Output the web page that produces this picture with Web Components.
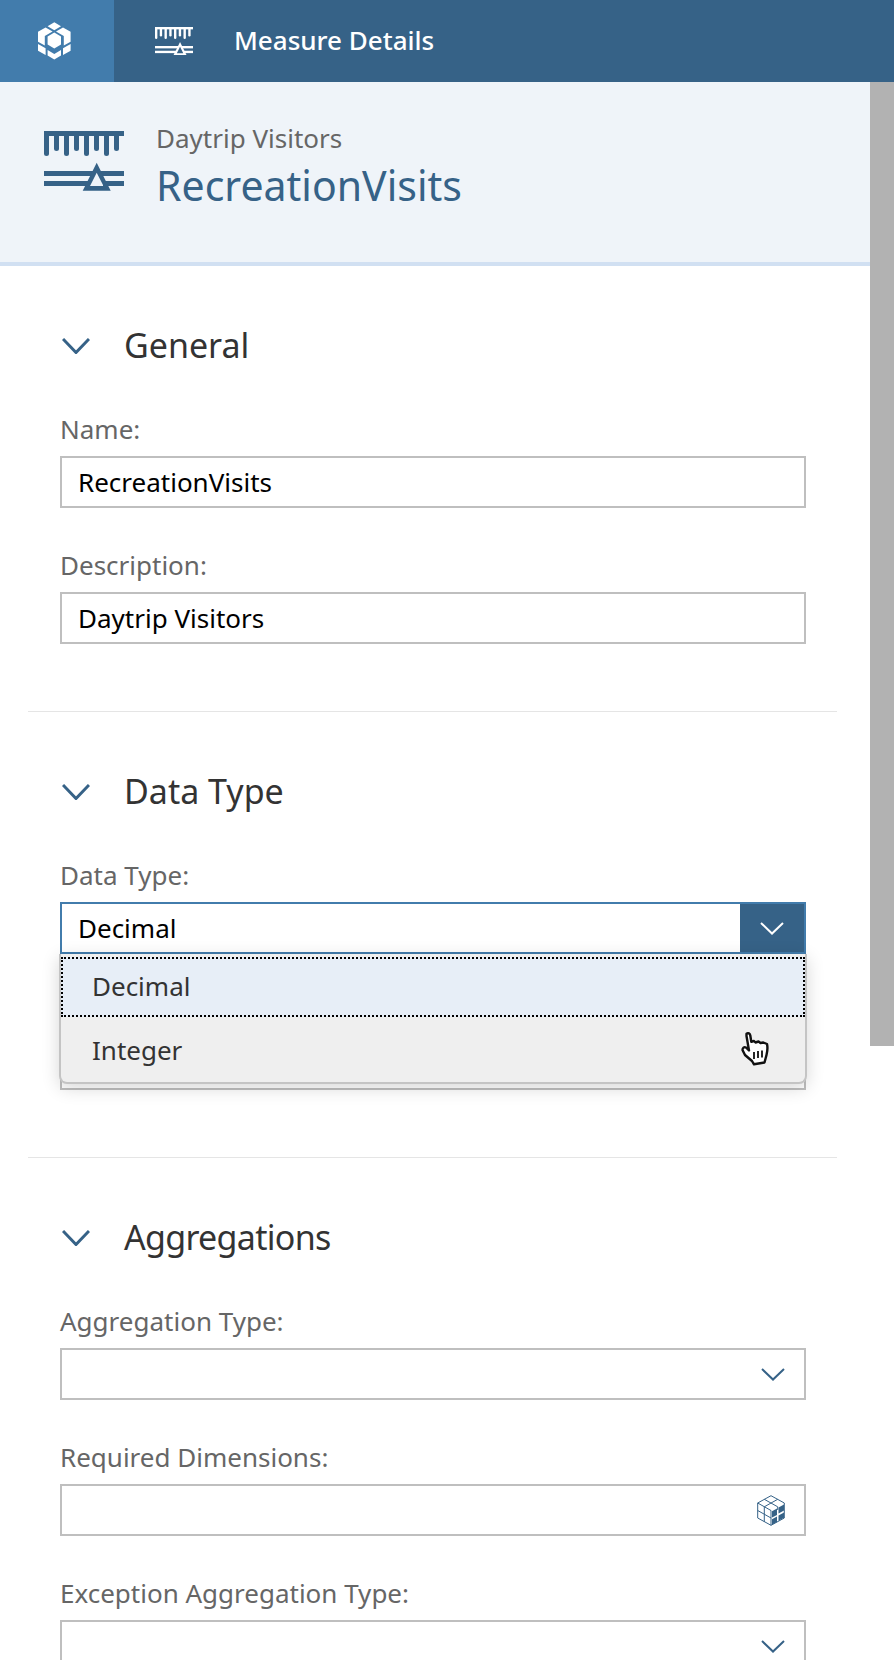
<!DOCTYPE html>
<html lang="en">
<head>
<meta charset="utf-8">
<title>Measure Details</title>
<style>
    html, body{
        margin:0;
        height:100%;
        overflow:hidden;
        background:#fff;
        font-family:"Noto Sans", sans-serif;
    }
    .page-body{
        display:flex;
        flex-direction:row;
        height:1578px;
    }
    .page-main{
        flex:1;
        min-width:0;
    }
</style>
</head>
<body>
<app-header>Measure Details</app-header>
<div class="page-body">
    <div class="page-main">
        <object-header subtitle="Daytrip Visitors">RecreationVisits</object-header>
        <form-panel>
            <form-section heading="General">
                <form-field label="Name:"><value-box value="RecreationVisits"></value-box></form-field>
                <form-field label="Description:"><value-box value="Daytrip Visitors"></value-box></form-field>
            </form-section>
            <form-section heading="Data Type">
                <form-field label="Data Type:">
                    <value-box value="Decimal" kind="open"></value-box>
                    <select-list></select-list>
                </form-field>
                <form-field label=""><value-box></value-box></form-field>
            </form-section>
            <form-section heading="Aggregations" style="--heading-spacing:-.7px" last>
                <form-field label="Aggregation Type:"><value-box kind="select"></value-box></form-field>
                <form-field label="Required Dimensions:"><value-box kind="cube"></value-box></form-field>
                <form-field label="Exception Aggregation Type:"><value-box kind="select"></value-box></form-field>
            </form-section>
        </form-panel>
    </div>
    <scroll-thumb></scroll-thumb>
</div>

<script>
const FONT = `"Noto Sans", sans-serif`;

const measureIcon = (width, height, color) => `
    <svg width="${width}" height="${height}" viewBox="0 0 80 60" fill="${color}" style="display:block">
        <rect x="0" y="0" width="80" height="5"/>
        <path d="M0 0h5v22.500a2.500 2.500 0 0 1-5 0z"/>
        <path d="M10 0h5v17.500a2.500 2.500 0 0 1-5 0z"/>
        <path d="M20 0h5v22.500a2.500 2.500 0 0 1-5 0z"/>
        <path d="M30 0h5v17.500a2.500 2.500 0 0 1-5 0z"/>
        <path d="M40 0h5v22.500a2.500 2.500 0 0 1-5 0z"/>
        <path d="M50 0h5v17.500a2.500 2.500 0 0 1-5 0z"/>
        <path d="M60 0h5v22.500a2.500 2.500 0 0 1-5 0z"/>
        <path d="M70 0h5v17.500a2.500 2.500 0 0 1-5 0z"/>
        <rect x="0" y="40" width="50" height="5"/>
        <rect x="55.400" y="40" width="24.600" height="5"/>
        <rect x="0" y="50" width="46" height="5"/>
        <rect x="59" y="50" width="21" height="5"/>
        <path fill-rule="evenodd" d="M52.700 31.700L66.700 59.700H38.700zM52.700 41.700L46 55H59.500z"/>
    </svg>`;

const chevron = (width, height, color, stroke) => `
    <svg width="${width}" height="${height}" viewBox="0 0 ${width} ${height}" fill="none" style="display:block">
        <path d="M1 1L${width / 2} ${height - 1.500}L${width - 1} 1" stroke="${color}" stroke-width="${stroke}"/>
    </svg>`;

class AppHeader extends HTMLElement {

    constructor() {
        super();
        this.shadow = this.attachShadow({mode: 'open'});
        this.shadow.innerHTML =
        /*html*/
        `
        <style>
            :host{
                display:flex;
                flex-direction:row;
                align-items:center;
                height:82px;
                background-color:#366287;
                color:white;
                font-family:${FONT};
            }
            .tile{
                display:flex;
                align-items:center;
                width:114px;
                height:100%;
                padding-left:37px;
                box-sizing:border-box;
                background-color:#427cac;
            }
            .measure{
                margin-left:41px;
            }
            .title{
                margin-left:41px;
                font-size:26px;
                font-weight:500;
                margin-top:-2px;
            }
        </style>
        <div class="tile">
            <svg width="34" height="38" viewBox="37 20.500 34 38" fill="white">
                <polygon points="54.300,20.700 61,24.700 54.300,28.700 47.600,24.700"/>
                <polygon points="38,30.200 45.600,26 52.600,30 44.800,34.400 44.800,44 38,40.200"/>
                <polygon points="70.600,30.200 63,26 56,30 63.800,34.400 63.800,44 70.600,40.200"/>
                <polygon points="54.300,31 61,35 61,43 54.300,47 47.600,43 47.600,35"/>
                <polygon points="38,42.500 45.600,46.800 45.600,53.500 38,49.300"/>
                <polygon points="70.600,42.500 63,46.800 63,53.500 70.600,49.300"/>
                <polygon points="47.600,48.500 54.300,52.400 61,48.500 61,54 54.300,58 47.600,54"/>
            </svg>
        </div>
        <div class="measure">${measureIcon(38, 28.500, 'white')}</div>
        <div class="title"><slot></slot></div>
        `;
    }
}

class ObjectHeader extends HTMLElement {

    constructor() {
        super();
        this.shadow = this.attachShadow({mode: 'open'});
        this.shadow.innerHTML =
        /*html*/
        `
        <style>
            :host{
                display:flex;
                flex-direction:row;
                height:136px;
                padding:44px 0 0 44px;
                background-color:#eff4f9;
                border-bottom:4px solid #d1e0f2;
                font-family:${FONT};
            }
            .icon{
                margin:5px 32px 0 0;
            }
            .subtitle{
                font-size:26px;
                line-height:24px;
                color:#666;
            }
            .title{
                font-size:41px;
                line-height:50px;
                margin-top:10px;
                color:#366287;
            }
        </style>
        <div class="icon">${measureIcon(80, 60, '#366287')}</div>
        <div>
            <div class="subtitle">${this.getAttribute('subtitle')}</div>
            <div class="title"><slot></slot></div>
        </div>
        `;
    }
}

class FormPanel extends HTMLElement {

    constructor() {
        super();
        this.shadow = this.attachShadow({mode: 'open'});
        this.shadow.innerHTML =
        /*html*/
        `
        <style>
            :host{
                display:block;
                padding:0 33px 0 28px;
            }
        </style>
        <slot></slot>
        `;
    }
}

class FormSection extends HTMLElement {

    constructor() {
        super();
        this.shadow = this.attachShadow({mode: 'open'});
        this.shadow.innerHTML =
        /*html*/
        `
        <style>
            :host{
                display:block;
                padding:60px 31px 67px 32px;
                border-bottom:1px solid #e5e5e5;
                font-family:${FONT};
            }
            :host([last]){
                border-bottom:none;
            }
            .heading{
                display:flex;
                flex-direction:row;
                align-items:center;
                height:40px;
                margin-bottom:50px;
                color:#333;
                font-size:34px;
                letter-spacing:var(--heading-spacing, 0);
            }
            .heading span{
                margin-top:-2px;
            }
            .arrow{
                margin:0 34px 0 2px;
            }
            .fields{
                display:flex;
                flex-direction:column;
                gap:44px;
            }
        </style>
        <div class="heading">
            <div class="arrow">${chevron(28, 16, '#366287', 3)}</div>
            <span>${this.getAttribute('heading')}</span>
        </div>
        <div class="fields"><slot></slot></div>
        `;
    }
}

class FormField extends HTMLElement {

    constructor() {
        super();
        this.shadow = this.attachShadow({mode: 'open'});
        this.shadow.innerHTML =
        /*html*/
        `
        <style>
            :host{
                display:block;
                position:relative;
                font-family:${FONT};
            }
            .label{
                height:40px;
                line-height:26px;
                font-size:26px;
                color:#666;
            }
        </style>
        <div class="label">${this.getAttribute('label')}</div>
        <slot></slot>
        `;
    }
}

class ValueBox extends HTMLElement {

    constructor() {
        super();
        this.shadow = this.attachShadow({mode: 'open'});
        const kind = this.getAttribute('kind');
        const value = this.getAttribute('value') || '';
        let addon = '';
        if (kind === 'open') {
            addon = `<div class="button">${chevron(24, 13, 'white', 2)}</div>`;
        } else if (kind === 'select') {
            addon = `<div class="addon">${chevron(24, 13, '#366287', 2)}</div>`;
        } else if (kind === 'cube') {
            addon = `<div class="addon">
                <svg width="28" height="31" viewBox="0 0 28 31" fill="none" stroke="#366287" stroke-width="1" style="display:block">
                    <path d="M14 .700L27.300 8V23L14 30.300L.700 23V8z"/>
                    <path d="M.700 8L14 15.500V30.300M.700 15.500L14 23M7.300 4.300L20.700 11.800V15M20.700 4.300L7.300 11.800V26.800"/>
                    <path fill="#366287" stroke="none" d="M15 16.200L20 13.400V20L15 22.600zM21.500 12.600L27 9.500V15.500L21.500 18.600zM15 24.200L20 21.400V27L15 29.800zM21.500 20.600L27 17.500V22.700L21.500 25.800z"/>
                </svg>
            </div>`;
        }
        this.shadow.innerHTML =
        /*html*/
        `
        <style>
            :host{
                display:flex;
                flex-direction:row;
                align-items:center;
                height:52px;
                box-sizing:border-box;
                border:2px solid #bfbfbf;
                background-color:white;
                font-family:${FONT};
                font-size:26px;
                color:black;
            }
            :host([kind="open"]){
                border-color:#427cac;
            }
            .value{
                flex:1;
                padding-left:16px;
            }
            .button{
                display:flex;
                align-items:center;
                justify-content:center;
                width:64px;
                height:100%;
                background-color:#366287;
            }
            .addon{
                margin-right:19px;
            }
        </style>
        <div class="value">${value}</div>
        ${addon}
        `;
    }
}

class SelectList extends HTMLElement {

    constructor() {
        super();
        this.shadow = this.attachShadow({mode: 'open'});
        this.shadow.innerHTML =
        /*html*/
        `
        <style>
            :host{
                display:block;
                position:absolute;
                z-index:2;
                left:-1px;
                right:-1px;
                top:92px;
                height:130px;
                box-sizing:border-box;
                border:solid #c4c4c4;
                border-width:0 2px 2px 2px;
                border-radius:0 0 8px 8px;
                background-color:#efefef;
                box-shadow:0 4px 18px rgba(0,0,0,.16);
                font-family:${FONT};
                font-size:26px;
                color:#333;
            }
            .item{
                display:flex;
                align-items:center;
                box-sizing:border-box;
                padding-left:31px;
            }
            .selected{
                height:60px;
                margin-top:3px;
                padding-left:29px;
                padding-bottom:3px;
                border:2px dotted black;
                background-color:#e7eef7;
            }
            .hover{
                height:65px;
                position:relative;
            }
            .hand{
                position:absolute;
                left:680px;
                top:15px;
                filter:blur(.5px);
            }
        </style>
        <div class="item selected">Decimal</div>
        <div class="item hover">Integer
            <svg class="hand" width="28" height="34" viewBox="0 0 28 34">
                <path d="M5.500 1.800C7.300.500 9 1.500 9.300 3.500L10.300 9.800L13 9L14.500 10.500L17.500 9.500L19.500 11L22.300 10.500L26 12C26.700 15 26.500 19 25.500 23L23.500 30.500L13 32.300L11 29L4 23L1.500 18C1.500 16 3 14.500 5 15.500L8 18.500L5.500 4z" fill="white" stroke="#111" stroke-width="2.400" stroke-linejoin="round"/>
                <path d="M13 20V27M17 19V26M21 18.500V25.500" stroke="#111" stroke-width="1.800"/>
            </svg>
        </div>
        `;
    }
}

class ScrollThumb extends HTMLElement {

    constructor() {
        super();
        this.shadow = this.attachShadow({mode: 'open'});
        this.shadow.innerHTML =
        /*html*/
        `
        <style>
            :host{
                display:block;
                flex:none;
                width:24px;
                height:964px;
                background-color:#b2b2b2;
            }
        </style>
        `;
    }
}

customElements.define('app-header', AppHeader);
customElements.define('object-header', ObjectHeader);
customElements.define('form-panel', FormPanel);
customElements.define('form-section', FormSection);
customElements.define('form-field', FormField);
customElements.define('value-box', ValueBox);
customElements.define('select-list', SelectList);
customElements.define('scroll-thumb', ScrollThumb);
</script>
</body>
</html>
